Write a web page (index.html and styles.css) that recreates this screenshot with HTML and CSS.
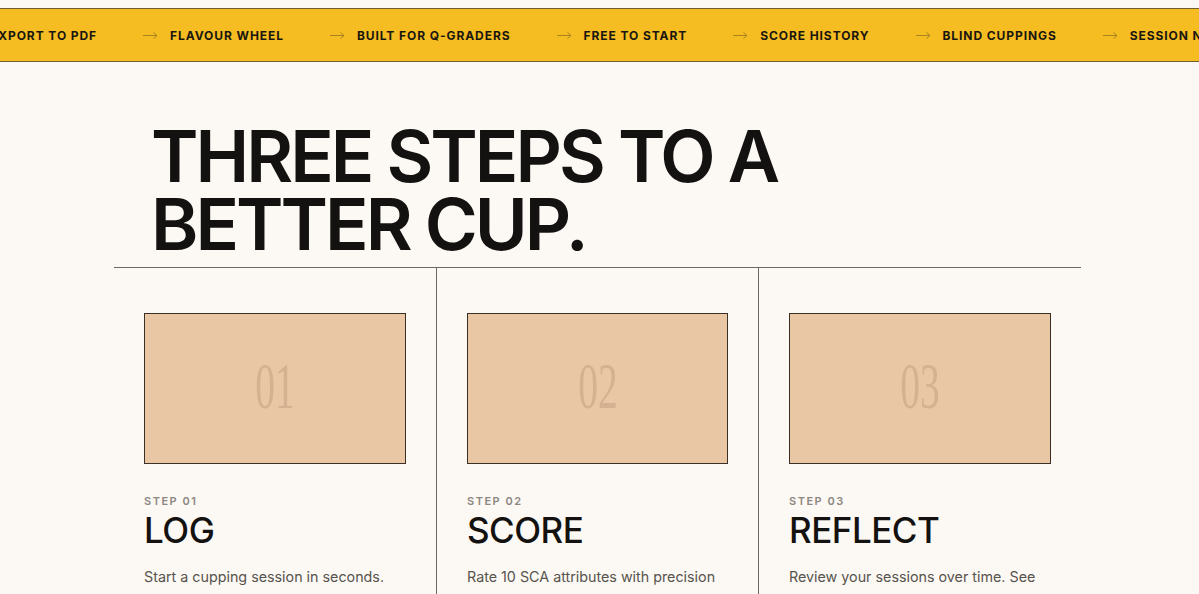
FILE: index.html
```html
<!DOCTYPE html>
<html lang="en">
<head>
<meta charset="utf-8">
<title>Three steps to a better cup</title>
<link rel="stylesheet" href="styles.css">
</head>
<body>
<div class="ticker">
  <div class="ticker-track">
    <span class="ticker-item">Export to PDF</span>
    <span class="ticker-item"><svg class="arrow" viewBox="0 0 15 8" width="15" height="8"><path d="M0 4.5H14M10.5 1.5L14 4.5L10.5 7.5"/></svg>Flavour wheel</span>
    <span class="ticker-item"><svg class="arrow" viewBox="0 0 15 8" width="15" height="8"><path d="M0 4.5H14M10.5 1.5L14 4.5L10.5 7.5"/></svg>Built for Q-graders</span>
    <span class="ticker-item"><svg class="arrow" viewBox="0 0 15 8" width="15" height="8"><path d="M0 4.5H14M10.5 1.5L14 4.5L10.5 7.5"/></svg>Free to start</span>
    <span class="ticker-item"><svg class="arrow" viewBox="0 0 15 8" width="15" height="8"><path d="M0 4.5H14M10.5 1.5L14 4.5L10.5 7.5"/></svg>Score history</span>
    <span class="ticker-item"><svg class="arrow" viewBox="0 0 15 8" width="15" height="8"><path d="M0 4.5H14M10.5 1.5L14 4.5L10.5 7.5"/></svg>Blind cuppings</span>
    <span class="ticker-item"><svg class="arrow" viewBox="0 0 15 8" width="15" height="8"><path d="M0 4.5H14M10.5 1.5L14 4.5L10.5 7.5"/></svg>Session notes</span>
    <span class="ticker-item"><svg class="arrow" viewBox="0 0 15 8" width="15" height="8"><path d="M0 4.5H14M10.5 1.5L14 4.5L10.5 7.5"/></svg>Export to PDF</span>
  </div>
</div>

<section class="steps">
  <h1 class="steps-title">Three steps to a<br>better cup.</h1>
  <div class="steps-grid">
    <article class="step">
      <div class="step-visual"><span class="step-num">01</span></div>
      <div class="step-label">Step 01</div>
      <h2 class="step-name">Log</h2>
      <p class="step-text">Start a cupping session in seconds.</p>
    </article>
    <article class="step">
      <div class="step-visual"><span class="step-num">02</span></div>
      <div class="step-label">Step 02</div>
      <h2 class="step-name">Score</h2>
      <p class="step-text">Rate 10 SCA attributes with precision</p>
    </article>
    <article class="step">
      <div class="step-visual"><span class="step-num">03</span></div>
      <div class="step-label">Step 03</div>
      <h2 class="step-name">Reflect</h2>
      <p class="step-text">Review your sessions over time. See</p>
    </article>
  </div>
</section>
</body>
</html>
```

FILE: styles.css
```css
* { box-sizing: border-box; }

html, body {
  margin: 0;
  padding: 0;
  background: #fcf9f4;
  color: #141210;
  font-family: Inter, "Noto Sans", sans-serif;
  overflow: hidden;
}

body { padding-top: 8px; }

.ticker {
  background: #f5bd22;
  border-top: 1px solid #6f5f32;
  border-bottom: 1px solid #6f5f32;
  height: 54px;
  overflow: hidden;
  display: flex;
  align-items: center;
}

.ticker-track {
  display: flex;
  gap: 46px;
  white-space: nowrap;
  transform: translateX(-10px);
}

.ticker-item {
  display: flex;
  align-items: center;
  gap: 12px;
  font-size: 12px;
  font-weight: 700;
  letter-spacing: 0.92px;
  text-transform: uppercase;
  color: #1a1610;
}

.arrow {
  fill: none;
  stroke: #a88420;
  stroke-width: 1;
  flex: none;
}

.steps {
  width: 967px;
  margin-left: 114px;
  padding-top: 60px;
}

.steps-title {
  margin: 0 0 9px 37px;
  font-size: 72px;
  line-height: 68px;
  font-weight: 600;
  letter-spacing: -3px;
  text-transform: uppercase;
}

.steps-grid {
  display: grid;
  grid-template-columns: 322px 322px 323px;
  border-top: 1px solid #6b6862;
}

.step {
  padding: 45px 30px 60px 30px;
}

.step + .step {
  border-left: 1px solid #6b6862;
}

.step-visual {
  height: 151px;
  background: #e9c6a4;
  border: 1px solid #3b3026;
  display: flex;
  align-items: center;
  justify-content: center;
}

.step-num {
  font-family: "Liberation Serif", serif;
  font-size: 66px;
  font-weight: 400;
  color: #d4b190;
  transform: scaleX(0.6);
  line-height: 1;
  margin-top: -5px;
}

.step-label {
  margin-top: 30px;
  font-size: 11px;
  font-weight: 600;
  letter-spacing: 1.5px;
  text-transform: uppercase;
  color: #8c8781;
}

.step-name {
  margin: 3px 0 0;
  font-size: 35px;
  font-weight: 500;
  letter-spacing: -0.5px;
  text-transform: uppercase;
  line-height: 1.1;
}

.step-text {
  margin: 16px 0 0;
  font-size: 14.3px;
  line-height: 1.5;
  color: #57534d;
}
```
